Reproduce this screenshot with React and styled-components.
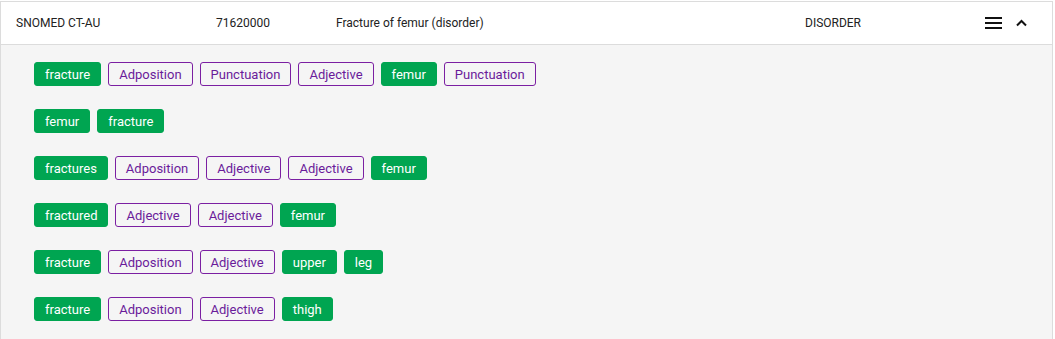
import React from "react";
import styled, { createGlobalStyle } from "styled-components";

const Global = createGlobalStyle`
  html, body { margin: 0; padding: 0; background: #fff; }
  body { font-family: Roboto, "Liberation Sans", Arial, sans-serif; }
`;

const Panel = styled.div`
  width: 1053px;
  margin-top: 1px;
  box-sizing: border-box;
  border: 1px solid #dcdcdc;
  background: #f5f5f5;
`;

const Header = styled.div`
  display: grid;
  grid-template-columns: 200px 120px 469px 1fr auto;
  align-items: center;
  height: 42px;
  padding: 0 25px 0 15px;
  background: #fff;
  border-bottom: 1px solid #dcdcdc;
  font-size: 12px;
  color: #222;
`;

const Cell = styled.div`
  white-space: nowrap;
`;

const Icons = styled.div`
  display: flex;
  align-items: center;
  gap: 14px;
`;

const Body = styled.div`
  display: flex;
  flex-direction: column;
  gap: 23px;
  padding: 17px 33px 19px;
`;

const Row = styled.div`
  display: flex;
  gap: 7px;
`;

const Tag = styled.span`
  display: inline-flex;
  align-items: center;
  box-sizing: border-box;
  height: 24px;
  padding: 0 10px;
  border-radius: 3px;
  font-size: 13px;
  border: 1px solid ${(p) => (p.$word ? "#00a551" : "#7b1fa2")};
  background: ${(p) => (p.$word ? "#00a551" : "transparent")};
  color: ${(p) => (p.$word ? "#fff" : "#6a1b9a")};
  font-weight: 400;
`;

const POS = ["Adposition", "Punctuation", "Adjective"];

const rows = [
  ["fracture", "Adposition", "Punctuation", "Adjective", "femur", "Punctuation"],
  ["femur", "fracture"],
  ["fractures", "Adposition", "Adjective", "Adjective", "femur"],
  ["fractured", "Adjective", "Adjective", "femur"],
  ["fracture", "Adposition", "Adjective", "upper", "leg"],
  ["fracture", "Adposition", "Adjective", "thigh"],
];

export default function App() {
  return (
    <>
      <Global />
      <Panel>
        <Header>
          <Cell>SNOMED CT-AU</Cell>
          <Cell>71620000</Cell>
          <Cell>Fracture of femur (disorder)</Cell>
          <Cell>DISORDER</Cell>
          <Icons>
            <svg width="17" height="12" viewBox="0 0 17 12">
              <rect x="0" y="0" width="17" height="2" fill="#111" />
              <rect x="0" y="5" width="17" height="2" fill="#111" />
              <rect x="0" y="10" width="17" height="2" fill="#111" />
            </svg>
            <svg width="11" height="8" viewBox="0 0 11 8">
              <path d="M1 6.5 L5.5 2 L10 6.5" fill="none" stroke="#111" strokeWidth="2" />
            </svg>
          </Icons>
        </Header>
        <Body>
          {rows.map((r, i) => (
            <Row key={i}>
              {r.map((t, j) => (
                <Tag key={j} $word={!POS.includes(t)}>
                  {t}
                </Tag>
              ))}
            </Row>
          ))}
        </Body>
      </Panel>
    </>
  );
}
